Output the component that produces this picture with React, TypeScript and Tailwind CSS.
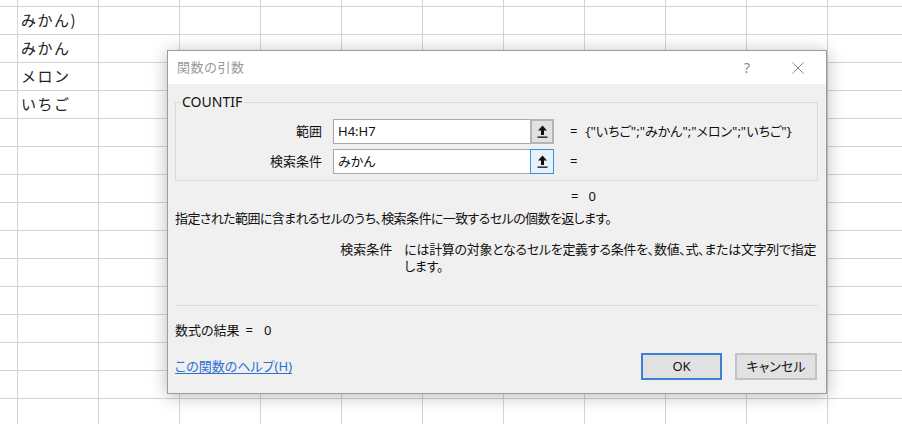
import React from 'react'

const font = "font-['Noto_Sans','Noto_Sans_CJK_JP',sans-serif]"

const cells: Record<string, string> = {
  '1-1': 'みかん)',
  '2-1': 'みかん',
  '3-1': 'メロン',
  '4-1': 'いちご',
}

function RefButton({ active }: { active?: boolean }) {
  return (
    <div
      className={
        active
          ? 'w-[24px] h-[25px] flex items-center justify-center border border-[#3c8ee0] bg-[#e5f1fb]'
          : 'w-[24px] h-[25px] flex items-center justify-center border-2 border-[#b4b4b4] bg-[#e1e1e1]'
      }
    >
      <svg width="11" height="13" viewBox="0 0 11 13">
        <path d="M5.5 0.5 L10 5.5 L7 5.5 L7 10 L4 10 L4 5.5 L1 5.5 Z" fill="#111" />
        <rect x="0.5" y="11.5" width="10" height="1.3" fill="#111" />
      </svg>
    </div>
  )
}

function ArgRow({ label, value, result, active }: { label: string; value: string; result: string; active?: boolean }) {
  return (
    <div className="flex items-center h-[25px]">
      <div className="w-[146px] text-right text-[13px] text-[#111]">{label}</div>
      <div className="ml-[11px] w-[197px] h-[25px] bg-white border border-[#a8a8a8] border-r-0 flex items-center pl-[4px] text-[13px] text-[#111]">
        {value}
      </div>
      <RefButton active={active} />
      <div className="ml-[16px] text-[13px] text-[#111]">=</div>
      <div className="ml-[8px] text-[13px] text-[#111] whitespace-nowrap">{result}</div>
    </div>
  )
}

export default function App() {
  const rows = Array.from({ length: 16 })
  const cols = Array.from({ length: 12 })
  return (
    <div className={`relative w-[902px] h-[424px] overflow-hidden bg-white ${font}`}>
      <div className="grid grid-cols-[18px_repeat(11,81px)] grid-rows-[7px_repeat(15,28px)]">
        {rows.map((_, r) =>
          cols.map((_, c) => (
            <div
              key={`${r}-${c}`}
              className="border-r border-b border-[#d4d4d4] flex items-center pl-[3px] text-[15px] tracking-[1.5px] text-[#222] whitespace-nowrap font-['Noto_Sans_CJK_JP',sans-serif]"
            >
              {cells[`${r}-${c}`] ?? ''}
            </div>
          ))
        )}
      </div>

      <div className="absolute left-[167px] top-[50px] w-[660px] h-[344px] border border-[#9c9c9c] bg-[#f0f0f0] shadow-[0_2px_16px_rgba(0,0,0,0.28)] flex flex-col">
        <div className="h-[33px] bg-white flex items-center pl-[9px] pr-[20px]">
          <div className="text-[13px] text-[#9a9a9a] tracking-[0.5px]">関数の引数</div>
          <div className="ml-auto text-[14px] text-[#8a8a8a] mr-[42px]">?</div>
          <svg width="12" height="12" viewBox="0 0 12 12" className="mr-[2px]">
            <path d="M0.5 0.5 L11.5 11.5 M11.5 0.5 L0.5 11.5" stroke="#8a8a8a" strokeWidth="1" />
          </svg>
        </div>

        <div className="px-[7px] flex flex-col flex-1 [font-feature-settings:'palt']">
          <fieldset className="mt-[9px] border border-[#dcdcdc] pt-[8px] pb-[6px] mr-[1px]">
            <legend className="ml-[5px] px-[1px] text-[14px] leading-[18px] text-[#111]">COUNTIF</legend>
            <div className="flex flex-col gap-[5px]">
              <ArgRow label="範囲" value="H4:H7" result={'{"いちご";"みかん";"メロン";"いちご"}'} />
              <ArgRow label="検索条件" value="みかん" result="" active />
            </div>
          </fieldset>

          <div className="mt-[7px] flex text-[13px] leading-[17px] text-[#111] pl-[396px]">
            <span>=</span>
            <span className="ml-[10px]">0</span>
          </div>

          <div className="mt-[5px] text-[13px] leading-[17px] text-[#111] whitespace-nowrap tracking-[-0.6px]">
            指定された範囲に含まれるセルのうち、検索条件に一致するセルの個数を返します。
          </div>

          <div className="mt-[14px] flex text-[13px] leading-[17px] text-[#111]">
            <div className="w-[220px] text-right">検索条件</div>
            <div className="ml-[12px] w-[420px] tracking-[-0.3px]">
              には計算の対象となるセルを定義する条件を、数値、式、または文字列で指定
              <br />
              します。
            </div>
          </div>

          <div className="mt-[30px] h-px bg-[#dcdcdc] mr-[1px]" />

          <div className="mt-[16px] flex text-[13px] leading-[17px] text-[#111]">
            <span>数式の結果</span>
            <span className="ml-[6px]">=</span>
            <span className="ml-[11px]">0</span>
          </div>

          <div className="mt-[14px] flex items-center">
            <a className="text-[13px] text-[#2f6fd0] underline underline-offset-2 cursor-pointer">この関数のヘルプ(H)</a>
            <button className="ml-auto w-[81px] h-[27px] border-2 border-[#3d80d6] bg-[#e1e1e1] text-[13px] text-[#111]">
              OK
            </button>
            <button className="ml-[13px] mr-[2px] w-[82px] h-[27px] border-2 border-[#c2c2c2] bg-[#e1e1e1] text-[13px] text-[#111]">
              キャンセル
            </button>
          </div>
        </div>
      </div>
    </div>
  )
}
